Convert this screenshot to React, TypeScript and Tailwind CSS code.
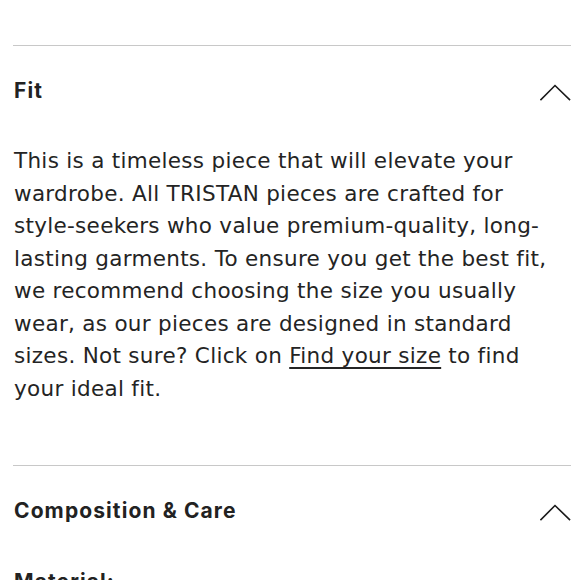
import React from "react";

function Chevron() {
  return (
    <svg width="31" height="17" viewBox="0 0 31 17" fill="none" className="shrink-0 mt-[3px]">
      <path d="M1 15.5 L15 1.5 L29.5 15.5" stroke="#1a1a1a" strokeWidth="1.6" strokeLinecap="square" strokeLinejoin="miter" />
    </svg>
  );
}

export default function App() {
  return (
    <div
      className="w-[580px] h-[580px] overflow-hidden bg-white text-[#222] pl-[13px] pr-[9px] pt-[45px]"
      style={{ fontFamily: "Inter, 'Liberation Sans', sans-serif" }}
    >
      <div className="border-t border-[#c8c8c8]">
        <div className="h-[90px] flex items-center justify-between">
          <h2 className="text-[21px] font-bold tracking-[1.1px] pl-[1px]">Fit</h2>
          <Chevron />
        </div>
        <p
          className="mt-[9px] pl-[1px] text-[21.5px] leading-[32.5px] tracking-[0.3px] text-[#242424] whitespace-nowrap"
          style={{ fontFamily: "'DejaVu Sans', sans-serif" }}
        >
          This is a timeless piece that will elevate your<br />
          wardrobe. All TRISTAN pieces are crafted for<br />
          style-seekers who value premium-quality, long-<br />
          lasting garments. To ensure you get the best fit,<br />
          we recommend choosing the size you usually<br />
          wear, as our pieces are designed in standard<br />
          sizes. Not sure? Click on{" "}
          <span className="underline underline-offset-[4px] decoration-[1.5px]">Find your size</span> to find<br />
          your ideal fit.
        </p>
      </div>
      <div className="mt-[60px] border-t border-[#c8c8c8]">
        <div className="h-[90px] flex items-center justify-between">
          <h2 className="text-[21px] font-bold tracking-[1.1px] pl-[1px]">Composition &amp; Care</h2>
          <Chevron />
        </div>
        <div className="mt-[10px] pl-[1px] text-[21px] font-bold tracking-[1.1px] leading-[32px]">Material:</div>
      </div>
    </div>
  );
}
